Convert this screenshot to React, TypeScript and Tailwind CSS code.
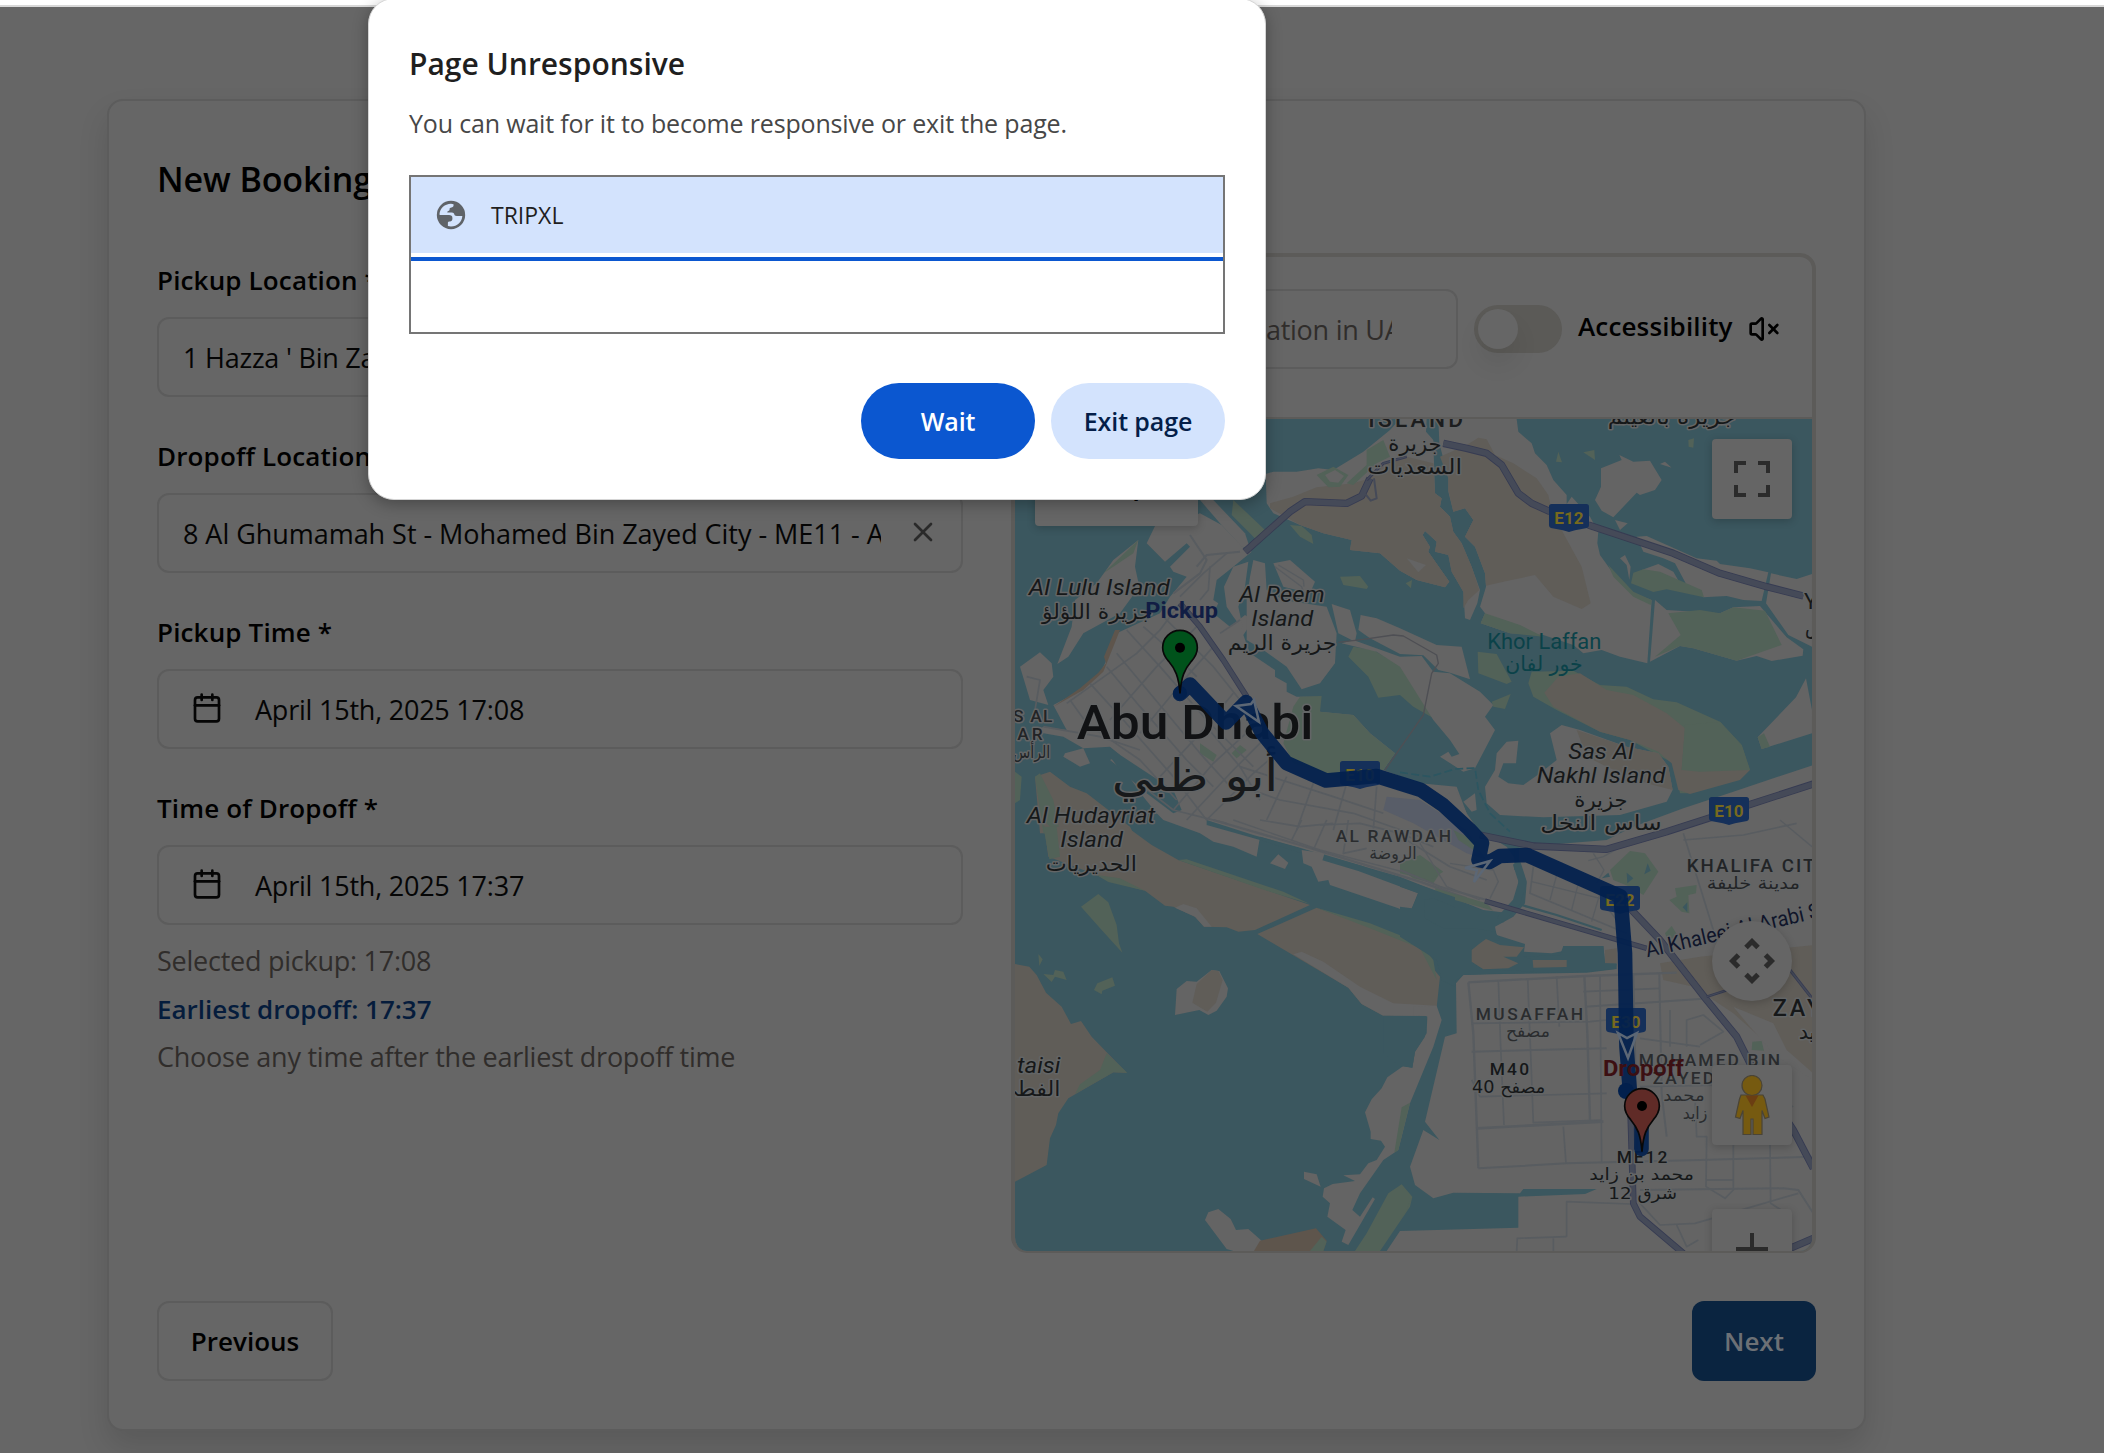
import React from "react";
import { Calendar, VolumeX, X } from "lucide-react";

const LAND = "#646464";
const BEIGE = "#605d58";
const GREEN = "#526258";
const SAND = "#5e554c";
const WATER = "#3b575f";
const ROAD = "#585c60";
const HIGHWAY = "#454a58";

const Poly = ({ f, p }: { f: string; p: string }) => <polygon fill={f} points={p} />;
const Line = ({ p, w = 5, c = ROAD }: { p: string; w?: number; c?: string }) => (
  <polyline points={p} fill="none" stroke={c} strokeWidth={w} strokeLinejoin="round" />
);
const Highway = ({ p, w = 20 }: { p: string; w?: number }) => (
  <>
    <Line p={p} w={w} c="#363b52" />
    <Line p={p} w={w - 5} c={HIGHWAY} />
  </>
);

type LabelProps = {
  x: number;
  y: number;
  s: number;
  w: number;
  c?: string;
  i?: boolean;
  b?: number;
  ar?: boolean;
  gap?: boolean;
  halo?: boolean;
  children: string;
};
const Label = ({ x, y, s, w, c = "#161819", i, b = 400, ar, gap, halo = true, children }: LabelProps) => (
  <text
    x={x}
    y={y}
    fontSize={s}
    fontWeight={b}
    fontStyle={i ? "italic" : "normal"}
    fontFamily={ar ? "'DejaVu Sans', sans-serif" : "Roboto, sans-serif"}
    textLength={w}
    lengthAdjust={gap ? "spacing" : "spacingAndGlyphs"}
    textAnchor="middle"
    fill={c}
    stroke={halo ? "#636566" : "none"}
    strokeWidth={halo ? 9 : 0}
    strokeLinejoin="round"
    paintOrder="stroke"
  >
    {children}
  </text>
);

const Shield = ({ x, y, t }: { x: number; y: number; t: string }) => (
  <g transform={`translate(${x} ${y})`}>
    <path d="M8 0h104a8 8 0 0 1 8 8v56q0 6-6 8l-36 7-18 5-18-5-36-7q-6-2-6-8V8a8 8 0 0 1 8-8z" fill="#15305a" />
    <text x="60" y="60" fontSize="52" fontWeight="700" fontFamily="Roboto, sans-serif" textAnchor="middle" textLength="88" lengthAdjust="spacingAndGlyphs" fill="#76691f">
      {t}
    </text>
  </g>
);

const Pin = ({ x, y, f }: { x: number; y: number; f: string }) => (
  <g transform={`translate(${x} ${y})`}>
    <path d="M0 0C-4-52-14-72-34-96C-48-112-52-124-52-137a52 52 0 0 1 104 0c0 13-4 25-18 41C14-72 4-52 0 0z" fill={f} stroke="#080808" strokeWidth="5" />
    <circle cx="0" cy="-137" r="15" fill="#000" />
  </g>
);

function MapDrawing() {
  return (
    <svg className="block h-full w-full" viewBox="1015 419 797 832" preserveAspectRatio="none">
      <rect x="1015" y="419" width="797" height="832" fill={WATER} />

      <g transform="translate(1000 400) scale(.33333)">
        {/* Saadiyat west */}
        <Poly f={LAND} p="797,222 820,215 890,215 955,205 1000,210 1090,155 1170,90 1200,57 1280,57 1278,95 1300,120 1305,280 1325,295 1320,320 1350,350 1360,395 1385,430 1415,500 1440,570 1432,610 1410,660 1395,655 1390,575 1355,515 1345,465 1305,455 1310,425 1275,393 1268,405 1290,440 1285,455 1348,545 1335,562 1250,540 1200,512 1140,460 1050,450 1055,420 970,400 900,375 820,340 800,310" />
        <Poly f={BEIGE} p="810,310 880,290 950,262 1060,250 1110,235 1160,190 1220,170 1300,190 1305,280 1325,295 1320,320 1350,350 1360,395 1385,430 1415,500 1438,570 1405,600 1390,625 1390,575 1355,515 1345,465 1305,455 1310,425 1275,393 1268,405 1290,440 1285,455 1348,545 1335,562 1250,540 1200,512 1140,460 1050,450 1055,420 970,400 900,375 810,325" />
        <Poly f={GREEN} p="1100,150 1150,120 1170,170 1130,190 1060,255 1040,250 1100,195" />
        <Poly f={GREEN} p="950,225 1000,200 1045,225 1020,260 985,262" />
        <Poly f={LAND} p="975,225 1005,210 1032,228 1015,248 990,245" />
        <Poly f={GREEN} p="870,375 905,378 935,405 940,432 900,410" />
        <Poly f={LAND} p="1220,475 1278,495 1255,517" />
        <Poly f={GREEN} p="1020,530 1080,528 1105,560 1100,567 1030,555" />
        <Poly f={GREEN} p="1217,550 1236,540 1233,565" />

        {/* Lulu island and western islets */}
        <Poly f={LAND} p="415,420 405,500 418,560 360,640 250,700 205,770 172,792 215,680 225,600 290,550 340,480" />
        <Poly f={GREEN} p="415,420 400,460 340,500 310,520" />
        <Poly f={LAND} p="60,800 120,757 155,790 160,830 130,870 145,915 90,900 75,850" />
        <Poly f={LAND} p="195,1060 250,1045 270,1090 240,1100 190,1070" />
        <Poly f={GREEN} p="45,1115 65,1130 60,1200 45,1210" />

        {/* Abu Dhabi island */}
        <Poly f={LAND} p="600,340 665,375 727,440 755,455 700,500 650,540 640,600 655,610 640,640 690,680 735,645 760,660 730,705 750,760 825,810 825,830 860,850 860,875 890,890 960,890 960,935 1060,945 1110,1000 1185,1060 1150,1110 1260,1150 1370,1160 1400,1240 1435,1290 1520,1340 1555,1390 1555,1480 1530,1540 1450,1530 1200,1430 970,1365 905,1345 780,1310 770,1370 700,1340 640,1325 600,1300 490,1260 470,1240 430,1190 380,1120 330,1080 360,1065 330,1040 250,1045 190,1010 105,995 130,980 200,990 160,915 245,870 300,820 315,790 350,700 480,640 510,590 560,530 520,515 510,500 570,440 560,430 495,485 440,430 465,378 540,365" />
        <Poly f={SAND} p="160,920 250,870 310,815 360,690 345,690 312,770 318,790 295,818 240,865" />
        <Poly f={GREEN} p="880,920 900,890 965,888 960,935 1060,945 1110,1000 1185,1060 1150,1110 1030,1140 950,1110 880,1090 850,1030" />
        <Poly f={WATER} p="330,1045 520,1170 545,1230 520,1240 440,1180 360,1110 330,1070" />
        <Poly f={GREEN} p="600,1030 650,1065 640,1085 600,1060" />
        <Poly f={GREEN} p="720,1035 740,1050 710,1075 695,1060" />
        <Poly f={GREEN} p="700,300 795,390 775,425 695,345" />
        <Poly f={LAND} p="600,300 640,300 735,400 750,445 725,440 660,370" />
        <Poly f="#585d68" p="1160,1190 1260,1200 1400,1290 1460,1380 1400,1360 1240,1270 1150,1230" />

        {/* Al Reem and neighbours */}
        <Poly f={LAND} p="672,560 700,500 745,485 735,560 715,620 730,690 700,650 680,620" />
        <Poly f={LAND} p="760,480 795,490 800,570 850,600 980,620 1010,700 1005,790 960,850 905,868 860,800 790,750 740,720 740,600 750,530" />
        <Poly f={LAND} p="820,490 870,480 945,545 930,580 850,560" />
        <Line p="825,500 905,560 915,590" w={4} />
        <Line p="835,495 910,540 912,560" w={4} />
        <Poly f={LAND} p="995,612 1050,630 1070,700 1065,725 1015,700" />
        <Poly f={GREEN} p="1045,770 1060,740 1120,750 1215,805 1310,960 1240,920 1200,885 1135,893 1105,830" />
        <Poly f={LAND} p="1082,645 1130,655 1200,685 1310,735 1385,740 1410,838 1350,818 1315,810 1270,766 1200,762 1110,715 1075,690" />
        <Poly f={LAND} p="1200,770 1265,768 1300,815 1350,820 1440,875 1480,915 1455,950 1485,990 1425,1105 1390,1115 1320,1070 1345,1055 1355,1070 1378,1062 1350,1020 1300,960 1200,800 1130,755 1025,730 1060,720" />
        <Line p="1015,727 1090,718 1180,705 1210,708 1310,765 1315,790 1295,820 1270,945 1155,1110" w={4} c="#4e4f54" />

        {/* Hudayriat tip */}
        <Poly f={BEIGE} p="105,1130 150,1115 210,1160 260,1180 390,1280 400,1300 120,1300" />
        <Poly f={GREEN} p="105,1130 120,1120 160,1200 180,1300 130,1300" />
      </g>

      <g transform="translate(1400 400) scale(.33333)">
        {/* Saadiyat east */}
        <Poly f={LAND} p="115,57 350,57 355,95 395,130 405,160 440,195 460,240 500,285 500,312 515,290 570,350 595,395 592,430 600,465 650,535 690,575 755,600 742,790 660,770 605,750 550,760 520,735 430,705 330,700 242,670 255,640 240,620 258,560 255,520 225,440 195,410 220,360 195,325 160,335 145,275 145,235 118,130" />
        <Poly f={BEIGE} p="145,270 145,235 120,170 200,135 235,113 260,118 285,165 340,190 410,235 445,285 455,330 490,400 545,500 572,610 545,627 460,590 405,525 310,545 258,557 255,520 225,440 195,410 220,360 195,325 160,335" />
        <Poly f={GREEN} p="255,640 360,675 430,710 330,700 242,670" />
        <Poly f={GREEN} p="625,495 700,575 755,600 752,615 700,590 640,530" />
        <Poly f={LAND} p="603,205 665,180 658,165 700,185 750,182 785,240 765,270 720,285 710,278 640,352 605,332 585,300 603,260" />
        <Poly f={LAND} p="780,192 795,185 815,203" />
        <Poly f={LAND} p="645,360 683,370 660,390" />
        <Poly f={LAND} p="660,475 675,465 692,500 688,540 680,495" />
        <Poly f={GREEN} p="550,157 583,150 585,180" />
        <Poly f={GREEN} p="475,155 486,187 468,185" />
        <Poly f={GREEN} p="865,120 882,115 880,143 866,140" />
        <Poly f={LAND} p="710,410 740,408 890,475 950,482 960,492 1050,505 1105,517 1085,603 1030,600 980,588 910,592 860,555 825,490 790,475 730,455" />
        <Poly f={LAND} p="725,510 775,492 820,515 840,550 780,530" />
        <Poly f={GREEN} p="700,518 730,508 780,515 905,570 912,592 800,568 760,576 693,550" />
        <Poly f={LAND} p="1113,520 1190,537 1236,522 1236,740 1165,705 1098,610" />
        <Poly f={LAND} p="765,600 800,630 960,640 1000,622 1080,618 1160,712 1210,748 1208,767 1115,783 1070,768 1010,782 880,745 840,738 750,785" />
        <Poly f={GREEN} p="805,640 900,630 960,640 1000,622 1095,632 1145,735 1010,782 880,745 840,738 765,770 842,705" />
        <Poly f={LAND} p="1218,835 1236,930 1236,1000 1085,1047 1073,1012 1188,892" />
        <Poly f={GREEN} p="1073,1012 1092,1000 1110,1040 1085,1047" />
        <Poly f={GREEN} p="385,850 395,815 520,812 600,855 680,860 760,898 830,907 960,965 1025,1035 1050,1110 870,1180 840,1180 820,1090 690,1020 600,995 470,930 400,890" />
        <Poly f={BEIGE} p="433,878 475,830 540,820 620,870 700,885 800,940 855,985 845,1110 1050,1110 1020,1140 870,1182 835,1170 815,1090 775,1055 690,1020 600,995 460,920" />
        <Poly f={GREEN} p="855,975 960,965 1025,1035 1050,1110 900,1115 845,1110" />
        <Poly f={GREEN} p="233,755 290,762 335,845 320,852 235,820" />
        <Poly f={GREEN} p="275,905 332,882 315,927 280,920" />
        <Poly f={LAND} p="485,975 540,990 680,1040 775,1060 805,1100 818,1170 800,1205 660,1245 430,1252 300,1245 260,1210 255,1160 285,1110 290,1060 320,1025 355,1022 348,1090 310,1090 295,1130 325,1150 370,1155 420,1120 470,1080 450,1000" />
        <Poly f={BEIGE} p="530,990 680,1040 775,1060 805,1100 818,1170 740,1150 620,1100 560,1070" />
        <Poly f={LAND} p="135,1190 165,1163 200,1240 180,1240" />
        <Poly f={LAND} p="190,1205 225,1180 230,1230 215,1235" />
        <path d="M0 1117 90 1130 165 1107 225 1104 235 1170 270 1240 330 1295" fill="none" stroke="#2c5661" strokeWidth="5" strokeDasharray="24 10" />
      </g>

      <g transform="translate(1000 820) scale(.33333)">
        <Poly f={BEIGE} p="130,0 150,20 380,20 455,75 535,120 930,255 765,330 715,335 680,322 612,320 585,290 520,260 495,257 435,212 325,183 290,165 145,110" />
        <Poly f={GREEN} p="130,20 170,20 180,110 148,118" />
        <Poly f={GREEN} p="290,165 360,175 435,212 325,186" />
        <Poly f={GREEN} p="535,120 560,118 850,215 930,252 800,212" />
        <Poly f={LAND} p="525,263 550,252 590,265 635,320 612,320 585,290" />
        <Poly f={BEIGE} p="772,342 950,263 1110,320 1260,378 1295,440 1320,470 1310,562 1260,587 1150,587 1085,552 1045,503" />
        <Poly f={LAND} p="880,403 905,395 970,425 1080,500 1180,550 1310,557 1300,590 1150,587 1085,552 1045,503" />
        <Poly f={GREEN} p="950,263 1110,310 1260,370 1300,420 1310,480 1260,385 1110,325" />
        <Poly f={LAND} p="525,585 530,507 560,483 590,485 635,450 658,453 684,505 680,530 650,572 625,585 598,570" />
        <Poly f={BEIGE} p="590,492 635,450 655,453 668,480 648,548 622,575 577,548" />
        <Poly f={BEIGE} p="45,432 88,440 110,465 138,518 185,560 213,612 243,603 275,650 380,758 340,757 205,835 175,880 168,915 150,955 140,1035 45,1085" />
        <Poly f={GREEN} p="320,700 382,758 340,757 225,822 240,793 300,750" />
        <Poly f={GREEN} p="243,260 295,222 325,247 350,315 357,370 367,398 305,330" />
        <Poly f={GREEN} p="115,402 128,418 118,438" />
        <Poly f={GREEN} p="130,462 160,465 165,450 190,455 200,480 165,470 155,486" />
        <Poly f={GREEN} p="282,510 292,490 337,472 345,497 307,512 305,523" />
        <Poly f={LAND} p="615,1200 625,1177 655,1167 692,1197 708,1230 745,1227 785,1262 765,1293 700,1293 680,1287" />
        <Poly f={SAND} p="780,1262 948,1225 980,1262 970,1293 762,1293" />
        <Poly f={GREEN} p="965,1250 980,1265 970,1293 930,1293" />
        <Poly f={LAND} p="912,1055 950,1063 962,1100 912,1077" />
        <Poly f={LAND} p="1095,877 1115,838 1145,805 1162,772 1210,738 1237,743 1245,695 1280,640 1282,588 1240,587 1240,560 1310,557 1325,600 1300,680 1230,850 1195,990 1150,1020 1080,1120 1057,1170 1080,1190 1118,1132 1125,1137 1045,1275 1025,1265 1037,1230 982,1190 990,1150 968,1130 972,1105 998,1092 1065,1083 1030,1066 1080,1063 1105,1030 1130,1020 1155,980 1143,962 1112,957 1112,935" />
        <Poly f={WATER} p="1150,587 1280,588 1275,650 1245,695 1237,743 1200,738 1150,700" />
        <Poly f={GREEN} p="1205,862 1230,848 1195,990 1183,998" />
        <Poly f={GREEN} p="1065,1293 1100,1240 1165,1120 1205,1093 1237,1130 1230,1160 1140,1293" />
        <Poly f={WATER} p="620,0 760,45 900,85 915,95 905,100 780,60 620,15" />
        <Poly f={LAND} p="810,130 835,103 865,128 855,147" />
        <Poly f={LAND} p="905,90 970,100 1255,215 1230,283 1195,265 990,195 985,180 955,185 935,140 910,130" />
        <Line p="970,112 1080,145 1260,212" w={18} c={WATER} />
        <Poly f={GREEN} p="1205,150 1230,130 1320,160 1300,190 1240,175" />
        <Line p="640,0 900,75 1260,185 1400,235" w={7} />
        <Line p="700,0 960,90 1170,145 1260,170" w={4} />
        <Line p="905,0 875,60" />
        <Line p="980,0 940,90" />
        <Line p="1045,0 1030,100 1100,85" />
        <Line p="960,15 1080,10 1200,40 1300,80" />
        <Line p="780,0 900,20 1000,10" />
      </g>

      <g transform="translate(1400 820) scale(.33333)">
        {/* mainland */}
        <Poly f={LAND} p="168,490 190,465 310,462 560,458 650,447 650,430 615,430 610,378 490,378 490,393 455,400 372,395 375,372 290,345 285,320 340,290 375,250 380,190 360,130 345,85 500,70 620,60 700,20 850,-35 1000,-85 1240,-165 1240,1293 -40,1293 0,1233 355,1223 355,1130 555,1122 590,1107 370,1107 360,1120 160,1118 100,1135 45,1095 30,1040 70,930 118,960 75,905 135,650 170,640" />
        <Poly f={BEIGE} p="780,430 900,410 1240,375 1240,770 1180,740 1000,580 880,500 790,480" />
        <Poly f={BEIGE} p="615,390 650,385 650,430 615,430" />
        <Poly f={LAND} p="1000,560 1120,610 1160,690 1240,760 1240,780 1130,710 1050,620" />
        <Poly f={GREEN} p="630,150 690,93 735,100 775,155 730,225 690,200 640,180" />
        <Poly f={GREEN} p="825,205 890,195 888,220 865,225 868,280 845,275 808,240 830,230" />
        <Poly f={GREEN} p="795,340 815,318 832,345 830,357 800,352" />
        <Poly f={GREEN} p="1057,665 1085,663 1092,692 1055,690" />
        <Poly f={WATER} p="743,130 752,152 733,163" />
        <Poly f={WATER} p="680,158 700,175 682,190" />
        <Poly f={WATER} p="605,175 625,158 630,170" />
        <Poly f={WATER} p="848,262 862,247 862,277" />
        <Poly f={GREEN} p="0,130 60,105 130,155 90,180 0,160" />
        <Poly f={GREEN} p="160,30 240,70 235,100 175,60" />
        <Poly f={GREEN} p="105,205 260,250 280,272 110,225" />
        <Poly f={WATER} p="0,175 75,200 165,232 165,262 100,235 72,240 75,295 130,325 220,325 285,335 300,360 240,370 215,390 215,425 250,448 400,455 400,420 370,410 480,405 490,378 610,378 615,430 650,432 645,447 560,455 310,460 190,465 168,480 165,500 125,480 110,420 0,350 0,260 35,265 55,220 0,200" />
        <Poly f={BEIGE} p="215,390 240,370 258,357 300,375 372,382 350,410 310,410 355,430 325,445 250,448 215,425" />
        <Poly f={BEIGE} p="398,420 500,420 500,441 400,443" />
        <Line p="350,130 368,185 350,245 300,300" w={24} c={WATER} />
        <Line p="365,255 470,285 605,330" w={7} c={WATER} />
        <Line p="350,85 350,150" w={14} c={WATER} />
        <Poly f={GREEN} p="0,1095 35,1130 20,1170 0,1200" />

        {/* street grids */}
        <Line p="205,487 555,468 830,458" w={7} />
        <Line p="205,487 220,640 235,1045" w={7} />
        <Line p="295,480 302,680 312,915" w={5} />
        <Line p="383,475 392,700 400,908 605,900" />
        <Line p="470,470 478,620" />
        <Line p="553,468 562,640 570,900" w={7} />
        <Line p="600,465 605,1030" />
        <Line p="215,610 570,605 620,600" />
        <Line p="215,695 620,685" w={6} />
        <Line p="215,780 240,830 620,820" />
        <Line p="230,925 610,905" w={8} />
        <Line p="235,1045 500,1030 900,1020 1240,1010" w={6} />
        <Line p="490,920 498,1030" />
        <Line p="500,1250 500,1145 690,1152" />
        <Line p="350,1293 352,1255 500,1250" />
        <Line p="460,1255 460,1293" />
        <Line p="550,515 780,505" />
        <Line p="555,560 780,545 930,535" w={6} />
        <Line p="700,465 712,1000" w={6} />
        <Line p="778,460 785,820 800,950" w={6} />
        <Line p="720,655 900,680" />
        <Line p="810,570 810,680" />
        <Line p="860,680 860,600 910,585 970,635 900,675" />
        <Line p="720,800 1000,795 1180,860" />
        <Line p="885,830 890,950 920,950 918,1100 975,1135 1000,1110 1000,950" />
        <Line p="1110,970 1112,1150 1160,1180" />
        <Line p="720,1110 1150,1105 1195,1110 1240,1180" w={6} />
        <Line p="920,1080 1000,1080" />
        <Line p="720,1150 780,1215 885,1210 1195,1120" />
        <Line p="830,1215 860,1280 895,1260" />
        <Line p="850,40 900,200 940,330" />
        <Line p="850,60 1030,45 1190,10" />
        <Line p="1140,0 1236,80" w={4} />
        <Line p="565,122 610,110 700,60" w={4} />
        <Line p="580,100 612,150 590,190" w={4} />
        <Line p="400,140 390,220 680,340" />
        <Line p="395,185 600,235 650,300" w={4} />
        <Line p="470,165 450,240" w={4} />
        <Line p="535,190 515,270" w={4} />
        <Line p="600,220 575,305" w={4} />
        <Line p="20,60 150,140 260,180" />
        <Line p="60,70 140,200 240,240" w={4} />
        <Line p="150,130 280,150 295,185 270,235" w={4} />
        <Line p="0,150 120,200 260,240" w={6} />

        <Highway p="240,45 400,78 620,88 800,35 940,-10 1045,-45 1240,-108" w={22} />
        <Highway p="255,243 500,315 740,385" w={16} />
        <Highway p="690,265 780,360 920,540 1010,650 1050,730 1180,930 1240,1045" w={22} />
        <Highway p="1170,450 1240,540" w={9} />
        <Highway p="1170,450 920,530" w={8} />
        <Highway p="692,880 700,1150 720,1190 850,1300" w={20} />
        <Highway p="1170,1285 1240,1255" w={22} />
      </g>

      <g transform="translate(1000 400) scale(.33333)">
        {/* downtown streets */}
        <Line p="570,405 620,480 600,520 520,580" w={6} />
        <Line p="720,455 620,465 590,500" w={6} />
        <Line p="630,500 625,570 600,600" />
        <Line p="680,460 610,520 540,590" />
        <Line p="540,610 480,690 410,760 200,910" />
        <Line p="590,680 470,800 330,960" />
        <Line p="640,740 560,830 420,1000" />
        <Line p="490,650 560,720 640,800 720,900" />
        <Line p="430,680 510,750 590,830" />
        <Line p="380,690 480,800 620,960 760,1100" />
        <Line p="350,760 450,880 600,1060 700,1170" />
        <Line p="320,800 420,920 560,1080 640,1160" />
        <Line p="270,850 370,960 520,1130 620,1260" />
        <Line p="210,900 260,970 420,1080 530,1200" />
        <Line p="130,980 300,1010 420,1050" />
        <Line p="430,1160 520,1230 680,1270" />
        <Line p="520,1230 640,1090 760,980" />
        <Line p="560,1260 700,1110 800,1010" />
        <Line p="480,1130 600,1000 700,880" />
        <Line p="620,1260 760,1120 830,1060" />
        <Line p="700,1150 840,1200 1060,1240 1260,1310" />
        <Line p="720,1100 1000,1190 1150,1240" />
        <Line p="860,1130 800,1260" />
        <Line p="940,1150 890,1290" />
        <Line p="1040,1150 1000,1290" />
        <Line p="1130,1160 1120,1290" />
        <Line p="620,980 720,1100 780,1200" />
        <Line p="660,700 720,660" />
        <Line p="80,830 120,840 100,960" />
        <Highway p="1110,235 1085,288 1040,310 915,305 870,335 735,455" w={22} />
        <Highway p="540,610 600,680 670,780 740,890" w={18} />
        <Highway p="1100,240 1150,190 1220,170" w={9} />
        <Highway p="1330,130 1400,145 1460,160 1505,195 1555,280 1595,310 1650,335" w={22} />
        <Highway p="1765,375 1840,400 2020,460 2160,520 2300,560 2410,588" w={22} />
        <Line p="1122,235 1130,295 1112,302 1096,282" w={6} c={HIGHWAY} />
      </g>

      {/* place names under the route */}
      <g transform="translate(1000 400) scale(.33333)">
        <Label x={585} y={1017} s={146} w={710} b={500} c="#111214">Abu Dhabi</Label>
        <Label x={585} y={1172} s={135} w={500} ar c="#17191b">أبو ظبي</Label>
        <Shield x={1020} y={1083} t="E10" />
        <Label x={292} y={657} s={62} w={332} ar>جزيرة اللؤلؤ</Label>
      </g>
      <g transform="translate(1400 820) scale(.33333)">
        <Shield x={600} y={198} t="E22" />
        <Shield x={618} y={564} t="E30" />
        <Label x={928} y={737} s={52} w={424} gap b={500} c="#2a2c2e">MOHAMED BIN</Label>
        <Label x={850} y={792} s={52} w={184} gap b={500} c="#2a2c2e">ZAYED</Label>
        <Label x={852} y={842} s={50} w={124} ar c="#2a2c2e">محمد</Label>
        <Label x={885} y={897} s={50} w={74} ar c="#2a2c2e">زايد</Label>
        <Label x={726} y={1029} s={52} w={152} gap b={500}>ME12</Label>
      </g>

      {/* route */}
      <g fill="none" stroke="#02204d" strokeWidth="14.6" strokeLinejoin="round" strokeLinecap="round" opacity=".93">
        <path d="M1180 694 1190 684.500 1226 722.500 1246 702 1262 733 1286.500 763 1326 780.500 1376.500 776 1421 790 1443 805 1469 829 1482 843 1478.500 860 1489.500 862 1500 856 1527 855 1620.500 896.500 1625 953 1626.500 1047 1630 1093 1641.500 1106 1641.500 1149" />
      </g>
      <circle cx="1180" cy="693" r="7" fill="#02204d" />
      <circle cx="1626" cy="1091" r="8" fill="#02204d" />
      <g fill="none" stroke="#5c6775" strokeWidth="2.500">
        <path d="M1236 706 1251 704 1254 700 1259 722z" />
        <path d="M1465 868 1490 861 1474 882 1477 870z" />
        <path d="M1618 1033 1627 1038 1637 1033 1628 1058z" />
      </g>

      <g transform="translate(1000 400) scale(.33333)">
        <Label x={298} y={586} s={68} w={424} i>Al Lulu Island</Label>
        <Label x={545} y={655} s={68} w={218} b={700} c="#111d44" halo={false}>Pickup</Label>
        <Label x={846} y={607} s={68} w={256} i>Al Reem</Label>
        <Label x={847} y={679} s={68} w={186} i>Island</Label>
        <Label x={846} y={749} s={62} w={326} ar>جزيرة الريم</Label>
        <Label x={98} y={965} s={52} w={118} gap b={500} c="#222426">S AL</Label>
        <Label x={90} y={1020} s={52} w={76} gap b={500} c="#222426">AR</Label>
        <Label x={95} y={1073} s={50} w={112} ar c="#222426">الرأس</Label>
        <Label x={273} y={1270} s={68} w={386} i>Al Hudayriat</Label>
        <Label x={1247} y={80} s={68} w={284} gap b={500} c="#1c1d1e">ISLAND</Label>
        <Label x={1245} y={152} s={64} w={160} ar>جزيرة</Label>
        <Label x={1244} y={222} s={64} w={284} ar>السعديات</Label>
      </g>
      <g transform="translate(1400 400) scale(.33333)">
        <Label x={815} y={73} s={62} w={384} ar>جزيرة بالغيلم</Label>
        <Label x={433} y={746} s={68} w={342} c="#0b4249" halo={false}>Khor Laffan</Label>
        <Label x={432} y={814} s={62} w={232} ar c="#0b4249" halo={false}>خور لفان</Label>
        <Label x={603} y={1078} s={68} w={196} i>Sas Al</Label>
        <Label x={603} y={1150} s={68} w={386} i>Nakhl Island</Label>
        <Label x={603} y={1220} s={62} w={160} ar>جزيرة</Label>
        <Label x={603} y={1290} s={62} w={364} ar>ساس النخل</Label>
        <Shield x={447} y={312} t="E12" />
        <Shield x={927} y={1191} t="E10" />
        <Label x={1232} y={626} s={68} w={40}>Y</Label>
        <Label x={1248} y={703} s={62} w={66} ar>س</Label>
      </g>
      <g transform="translate(1000 820) scale(.33333)">
        <Label x={275} y={82} s={68} w={188} i>Island</Label>
        <Label x={274} y={152} s={62} w={274} ar>الحديريات</Label>
        <Label x={116} y={760} s={68} w={130} i>taisi</Label>
        <Label x={90} y={828} s={62} w={182} ar>الفطي</Label>
        <Label x={1180} y={66} s={52} w={346} gap b={500} c="#2a2c2e">AL RAWDAH</Label>
        <Label x={1179} y={118} s={50} w={142} ar c="#2a2c2e">الروضة</Label>
      </g>
      <g transform="translate(1400 820) scale(.33333)">
        <Label x={1072} y={156} s={56} w={424} gap b={500} c="#222426">KHALIFA CITY</Label>
        <Label x={1060} y={206} s={50} w={280} ar c="#222426">مدينة خليفة</Label>
        <Label x={388} y={600} s={52} w={322} gap b={500} c="#2a2c2e">MUSAFFAH</Label>
        <Label x={384} y={652} s={50} w={132} ar c="#2a2c2e">مصفح</Label>
        <Label x={328} y={765} s={52} w={118} gap b={500}>M40</Label>
        <Label x={326} y={819} s={52} w={220} ar>مصفح 40</Label>
        <Label x={725} y={1081} s={50} w={314} ar>محمد بن زايد</Label>
        <Label x={728} y={1136} s={50} w={206} ar>شرق 12</Label>
        <Label x={1215} y={588} s={70} w={194} gap b={500}>ZAYE</Label>
        <Label x={1245} y={658} s={62} w={98} ar>زايد</Label>
        <g transform="rotate(-13 742 412)">
          <Label x={1020} y={412} s={64} w={556} c="#10152a">Al Khaleej Al Arabi St</Label>
        </g>
        <Label x={730} y={768} s={68} w={242} b={700} c="#3c0f12" halo={false}>Dropoff</Label>
        <Pin x={726} y={995} f="#602b27" />
      </g>
      <g transform="translate(1000 400) scale(.33333)">
        <Pin x={540} y={880} f="#00521b" />
      </g>
    </svg>
  );
}

const control = "absolute right-5 flex h-20 w-20 items-center justify-center bg-[#656565] shadow-[0_2px_8px_rgba(0,0,0,0.2)]";

function BookingMap() {
  return (
    <div className="relative h-[832px] w-full overflow-hidden">
      <MapDrawing />
      <div className="absolute left-5 top-5 flex h-[87px] w-[163px] items-center justify-center rounded bg-[#666] pb-1 font-[Roboto] text-4xl text-black shadow-[0_2px_8px_rgba(0,0,0,0.2)]">
        Map
      </div>
      <div className={`${control} top-5 rounded`}>
        <svg width="36" height="36" viewBox="0 0 18 18" fill="#2b2b2b">
          <path d="M0 0v6h2V2h4V0H0zm16 0h-4v2h4v4h2V0h-2zm0 16h-4v2h6v-6h-2v4zM2 12H0v6h6v-2H2v-4z" />
        </svg>
      </div>
      <div className={`${control} top-[502px] rounded-full`}>
        <svg width="46" height="46" viewBox="0 0 46 46" fill="none" stroke="#2b2b2b" strokeWidth="5">
          <path d="M17 9.500l6-6 6 6M17 36.500l6 6 6-6M9.500 17l-6 6 6 6M36.500 17l6 6-6 6" />
        </svg>
      </div>
      <div className={`${control} top-[646px] rounded`}>
        <svg width="36" height="60" viewBox="0 0 36 60" fill="#765a10" stroke="#4a4436" strokeWidth="1.200">
          <path d="M7 20h22l2 4 4 18-4 1.500-3-8v24H19V44h-2v15.500H9v-24l-3 8L1.500 42l4-18z" />
          <circle cx="18" cy="10.500" r="10" />
          <path d="M11.500 20.500h13L18 32z" fill="#6b3e12" stroke="none" />
        </svg>
      </div>
      <div className={`${control} top-[790px] rounded-t`}>
        <svg width="32" height="32" viewBox="0 0 32 32" fill="#2b2b2b">
          <path d="M14 0h4v14h14v4H18v14h-4V18H0v-4h14z" />
        </svg>
      </div>
    </div>
  );
}

const label = "text-[26px] font-semibold leading-8 tracking-[0.15px] text-black";
const box =
  "mt-[21px] flex h-20 items-center rounded-xl border-2 border-[#5c5c5c] pt-[2px] text-[27px] tracking-[-0.22px] text-[#050505]";

function BookingForm() {
  return (
    <div className="w-[806px] pt-[11px]">
      <div className={label}>Pickup Location *</div>
      <div className={`${box} px-6`}>
        <div className="w-[698px] overflow-hidden whitespace-nowrap">1 Hazza ' Bin Zayed the First St - Al Manhal - W15</div>
      </div>
      <div className={`${label} mt-[43px]`}>Dropoff Location *</div>
      <div className={`${box} justify-between pl-6 pr-[22px]`}>
        <div className="w-[698px] overflow-hidden whitespace-nowrap tracking-[-0.04px]">
          8 Al Ghumamah St - Mohamed Bin Zayed City - ME11 - Abu Dhabi
        </div>
        <X size={32} strokeWidth={2} className="-mt-1 text-[#2a2a2a]" />
      </div>
      <div className={`${label} mt-[43px]`}>Pickup Time *</div>
      <div className={`${box} gap-8 px-8`}>
        <Calendar size={32} strokeWidth={2} className="-mt-1" />
        <span>April 15th, 2025 17:08</span>
      </div>
      <div className={`${label} mt-[43px]`}>Time of Dropoff *</div>
      <div className={`${box} gap-8 px-8`}>
        <Calendar size={32} strokeWidth={2} className="-mt-1" />
        <span>April 15th, 2025 17:37</span>
      </div>
      <div className="mt-3 text-[27px] leading-[48px] tracking-[-0.25px] text-[#302d2b]">
        <p>Selected pickup: 17:08</p>
        <p className="text-[26px] font-semibold tracking-normal text-[#051c3c]">Earliest dropoff: 17:37</p>
        <p>Choose any time after the earliest dropoff time</p>
      </div>
    </div>
  );
}

function MapPanel() {
  return (
    <div className="h-[1000px] w-[805px] overflow-hidden rounded-2xl border-4 border-b-2 border-[#5c5b59]">
      <div className="flex h-[162px] items-start border-b-2 border-[#5c5b59] pl-8 pt-8">
        <div className="flex h-20 w-[411px] items-center rounded-xl border-2 border-[#5c5c5c] pl-6 pt-[3px]">
          <div className="w-[319px] overflow-hidden whitespace-nowrap pl-[3px] text-[27px] tracking-[-0.25px] text-[#302d2b]">
            Search for a location in UAE
          </div>
        </div>
        <div className="ml-4 mt-4 h-12 w-[88px] rounded-full bg-[#5b5a57] p-1">
          <div className="h-10 w-10 rounded-full bg-[#666] shadow-[0_16px_24px_rgba(0,0,0,0.07)]" />
        </div>
        <div className="ml-4 mt-[21px] text-[26px] font-semibold leading-8 tracking-[0.15px] text-black">Accessibility</div>
        <VolumeX size={32} strokeWidth={2} className="ml-[15px] mt-6 text-black" />
      </div>
      <BookingMap />
    </div>
  );
}

function GlobeIcon() {
  return (
    <svg width="34" height="34" viewBox="0 0 24 24">
      <circle cx="12" cy="12" r="10" fill="#5f6368" />
      <path
        d="M3.900 11.200C4.200 7.500 7.500 4.200 12 4.100l1.800.3c.2 1.600-.4 2.200-2 2.400-.9.100-.8.800-.8 1.600-.1.700-1.700.7-1.700 1.400 0 .5.700.4 3.200.4 1.500 0 1.700.8 2 1.800.3.900 2 .7 5.500.7-.3 4.200-3.600 7.400-8 7.400l-2.200-.3V17.500c0-.8.500-.9 1.600-1 1.500-.2 1.600-.9 1.600-2.300 0-1.700-.9-2.200-2.400-2.200H4z"
        fill="#d3e3fd"
      />
    </svg>
  );
}

function UnresponsiveDialog() {
  return (
    <div className="absolute left-[368px] top-[-2px] h-[502px] w-[898px] rounded-[26px] border border-[#d5d5d5] bg-white px-10 shadow-[0_4px_16px_rgba(0,0,0,0.3)]">
      <h2 className="mt-[45px] text-[30px] font-semibold leading-10 text-[#1f1f1f]">Page Unresponsive</h2>
      <p className="mt-[23px] whitespace-nowrap text-[25px] leading-8 tracking-[-0.17px] text-[#474747]">
        You can wait for it to become responsive or exit the page.
      </p>
      <div className="mt-9 h-[159px] border-2 border-[#757575]">
        <div className="flex h-[76px] items-center bg-[#d3e3fd] pl-[23px]">
          <GlobeIcon />
          <span className="ml-[23px] text-[23px] text-[#1f1f1f]">TRIPXL</span>
        </div>
        <div className="mt-1 h-1 bg-[#0b57d0]" />
      </div>
      <div className="mt-[49px] flex justify-end gap-4 text-[25px] font-semibold tracking-[-0.1px]">
        <button className="h-[76px] w-[174px] rounded-full bg-[#0b57d0] pt-px text-white">Wait</button>
        <button className="h-[76px] w-[174px] rounded-full bg-[#d3e3fd] pt-px text-[#041e49]">Exit page</button>
      </div>
    </div>
  );
}

export default function App() {
  return (
    <div className="relative h-[1453px] w-[2104px] overflow-hidden bg-[#666] font-['Open_Sans',sans-serif]">
      <div className="h-[7px] border-b-2 border-[#d8d8d8] bg-white" />
      <main className="ml-[107px] mt-[92px] h-[1332px] w-[1759px] rounded-2xl border-2 border-[#5c5c5c] bg-[#666] px-12 shadow-[0_16px_30px_rgba(0,0,0,0.12)]">
        <h1 className="pt-[58px] text-[34px] font-semibold leading-10 tracking-[-0.1px] text-black">New Booking</h1>
        <div className="mt-[54px] flex justify-between">
          <BookingForm />
          <MapPanel />
        </div>
        <div className="mt-12 flex justify-between text-[26px] font-semibold">
          <button className="h-20 w-44 rounded-xl border-2 border-[#5c5c5c] pt-px text-black">Previous</button>
          <button className="h-20 w-[124px] rounded-xl bg-[#0a2440] pt-px text-[#6c7075]">Next</button>
        </div>
      </main>
      <UnresponsiveDialog />
    </div>
  );
}
